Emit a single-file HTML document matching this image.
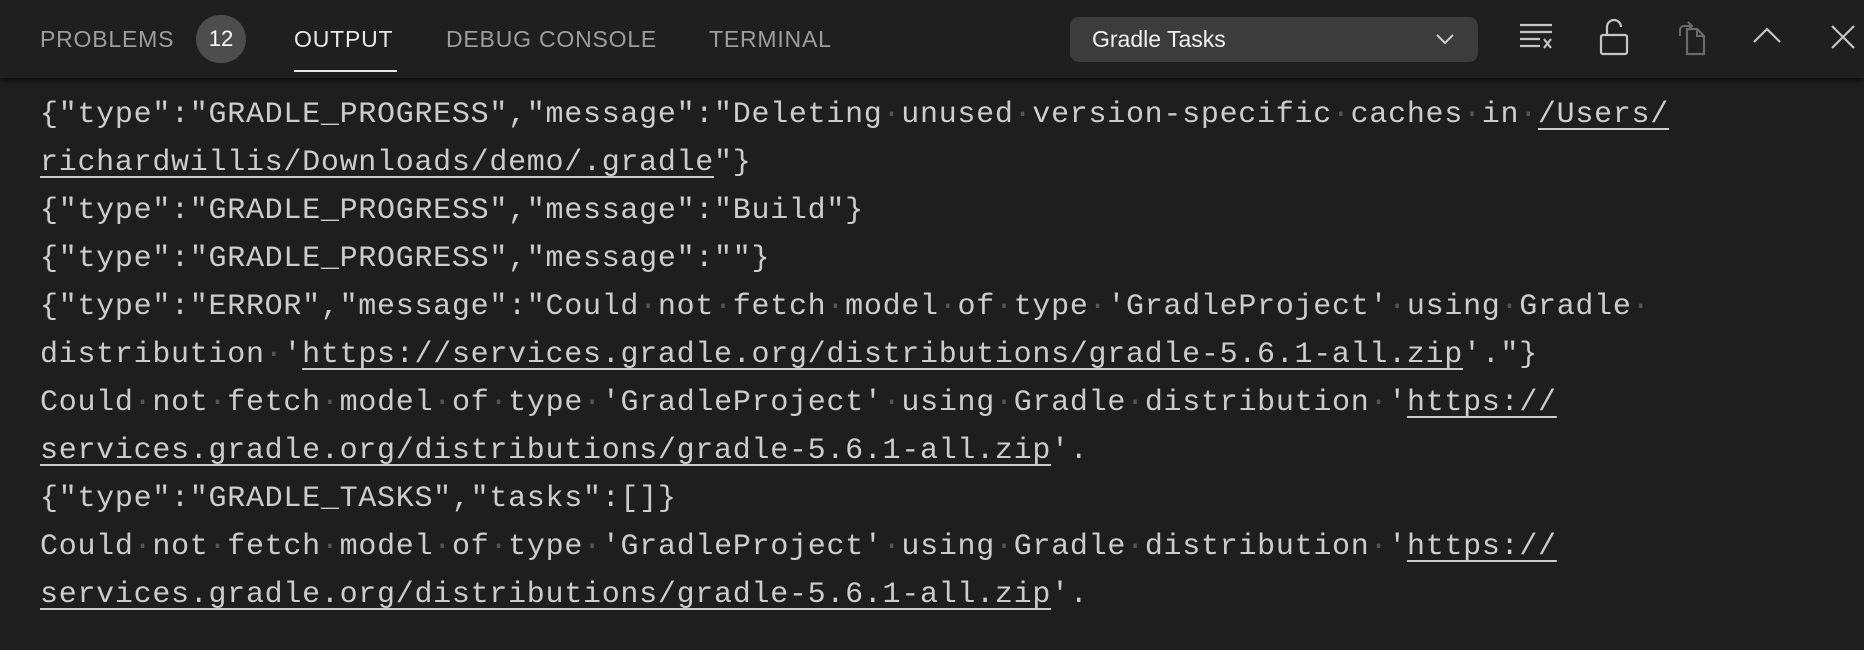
<!DOCTYPE html>
<html><head><meta charset="utf-8"><style>
*{margin:0;padding:0;box-sizing:border-box}
body{width:1864px;height:650px;background:#1e1e1e;overflow:hidden;font-family:"Liberation Sans",sans-serif;position:relative}
.hdr{position:absolute;left:0;top:0;width:1864px;height:78px;background:#1f1f1f;box-shadow:0 2px 5px rgba(0,0,0,.6)}
.tab{position:absolute;top:24px;font-size:23px;color:#9d9d9d;letter-spacing:0.8px;line-height:30px;white-space:nowrap}
.badge{position:absolute;left:196px;top:15px;width:50px;height:48px;border-radius:24px;background:#4d4d4d;color:#fff;font-size:22px;text-align:center;line-height:48px}
.ul{position:absolute;left:294px;top:70px;width:103px;height:2px;background:#e7e7e7}
.dd{position:absolute;left:1070px;top:17px;width:408px;height:45px;border-radius:9px;background:#3c3c3c;color:#f0f0f0;font-size:23px;line-height:45px;padding-left:22px}
svg.i{position:absolute}
.out{position:absolute;left:40px;top:91px;font-family:"Liberation Mono",monospace;font-size:30px;letter-spacing:0.72px;color:#cccccc;line-height:48px;white-space:pre}
.out u{text-decoration:underline;text-underline-offset:6px;text-decoration-thickness:2px}
.out i{font-style:normal;color:#555}
</style></head><body>
<div class="hdr">
<div class="tab" style="left:40px">PROBLEMS</div>
<div class="badge">12</div>
<div class="tab" style="left:294px;color:#e7e7e7">OUTPUT</div>
<div class="ul"></div>
<div class="tab" style="left:446px">DEBUG CONSOLE</div>
<div class="tab" style="left:709px">TERMINAL</div>
<div class="dd">Gradle Tasks
<svg style="position:absolute;left:365px;top:14px" width="20" height="16" viewBox="0 0 20 16"><path d="M2 4 L10 12 L18 4" stroke="#d0d0d0" stroke-width="2" fill="none"/></svg></div>
<svg class="i" style="left:1518px;top:22px" width="36" height="30" viewBox="0 0 36 30"><path d="M2 3H34M2 10H34M2 17H22M2 24H22" stroke="#c5c5c5" stroke-width="2.2" fill="none"/><path d="M26 17L33 26M33 17L26 26" stroke="#c5c5c5" stroke-width="2.2"/></svg>
<svg class="i" style="left:1598px;top:18px" width="32" height="38" viewBox="0 0 32 38"><path d="M9 17V9a7 7 0 0 1 14 0" stroke="#c5c5c5" stroke-width="2.2" fill="none"/><rect x="3" y="17" width="26" height="19" rx="2" stroke="#c5c5c5" stroke-width="2.2" fill="none"/></svg>
<svg class="i" style="left:1674px;top:20px" width="36" height="36" viewBox="0 0 36 36"><path d="M13 9H23L30 16V34H13Z" stroke="#6a6a6a" stroke-width="2.2" fill="none"/><path d="M23 9V16H30" stroke="#6a6a6a" stroke-width="2" fill="none"/><path d="M6 16V10a4 4 0 0 1 4-4h7M14 2l4 4-4 4" stroke="#6a6a6a" stroke-width="2" fill="none"/></svg>
<svg class="i" style="left:1752px;top:26px" width="30" height="20" viewBox="0 0 30 20"><path d="M2 16L15 3L28 16" stroke="#c5c5c5" stroke-width="2.2" fill="none"/></svg>
<svg class="i" style="left:1830px;top:24px" width="26" height="26" viewBox="0 0 26 26"><path d="M2 2L24 24M24 2L2 24" stroke="#c5c5c5" stroke-width="2.2"/></svg>
</div>
<div class="out">{"type":"GRADLE_PROGRESS","message":"Deleting<i>·</i>unused<i>·</i>version-specific<i>·</i>caches<i>·</i>in<i>·</i><u>/Users/</u>
<u>richardwillis/Downloads/demo/.gradle</u>"}
{"type":"GRADLE_PROGRESS","message":"Build"}
{"type":"GRADLE_PROGRESS","message":""}
{"type":"ERROR","message":"Could<i>·</i>not<i>·</i>fetch<i>·</i>model<i>·</i>of<i>·</i>type<i>·</i>'GradleProject'<i>·</i>using<i>·</i>Gradle<i>·</i>
distribution<i>·</i>'<u>https://services.gradle.org/distributions/gradle-5.6.1-all.zip</u>'."}
Could<i>·</i>not<i>·</i>fetch<i>·</i>model<i>·</i>of<i>·</i>type<i>·</i>'GradleProject'<i>·</i>using<i>·</i>Gradle<i>·</i>distribution<i>·</i>'<u>https://</u>
<u>services.gradle.org/distributions/gradle-5.6.1-all.zip</u>'.
{"type":"GRADLE_TASKS","tasks":[]}
Could<i>·</i>not<i>·</i>fetch<i>·</i>model<i>·</i>of<i>·</i>type<i>·</i>'GradleProject'<i>·</i>using<i>·</i>Gradle<i>·</i>distribution<i>·</i>'<u>https://</u>
<u>services.gradle.org/distributions/gradle-5.6.1-all.zip</u>'.</div>
</body></html>
